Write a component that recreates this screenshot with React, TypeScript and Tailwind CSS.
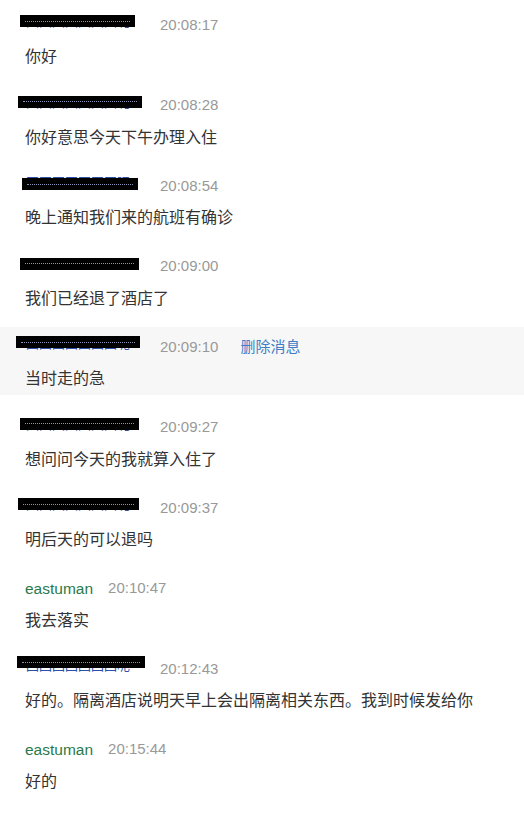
const messages = [
  { name: null, box: [20, 115, 15], time: '20:08:17', text: '你好' },
  { name: null, box: [18, 124, 15], time: '20:08:28', text: '你好意思今天下午办理入住' },
  { name: null, box: [22, 116, 17], time: '20:08:54', text: '晚上通知我们来的航班有确诊' },
  { name: null, box: [20, 119, 16], time: '20:09:00', text: '我们已经退了酒店了' },
  { name: null, box: [16, 124, 14], time: '20:09:10', text: '当时走的急', active: true },
  { name: null, box: [20, 119, 15], time: '20:09:27', text: '想问问今天的我就算入住了' },
  { name: null, box: [18, 121, 15], time: '20:09:37', text: '明后天的可以退吗' },
  { name: 'eastuman', time: '20:10:47', text: '我去落实' },
  { name: null, box: [17, 128, 12], time: '20:12:43', text: '好的。隔离酒店说明天早上会出隔离相关东西。我到时候发给你' },
  { name: 'eastuman', time: '20:15:44', text: '好的' },
];

// name is covered by a black box in the screenshot
function Redacted({ left, width, top }: { left: number; width: number; top: number }) {
  return (
    <div className="relative w-[135px] h-[22px] shrink-0">
      <div className="absolute left-[1px] top-[1px] text-[13px] leading-[14px] text-[#2b4fa8] whitespace-nowrap overflow-hidden w-[108px]">
        回回回回回回回呢
      </div>
      <div
        className="absolute bg-black flex items-center justify-center px-[5px]"
        style={{ left: left - 25, width, top: top - 14, height: 12 }}
      >
        <div className="w-full border-t border-dotted border-[#8a93b8]" />
      </div>
    </div>
  );
}

export default function App() {
  return (
    <div
      className="w-[524px] h-[813px] bg-white pt-[5px] overflow-hidden"
      style={{ fontFamily: '"Liberation Sans", "Noto Sans CJK SC", sans-serif' }}
    >
      {messages.map((m, i) => (
        <div
          key={i}
          className={`h-[68px] pt-[9px] pl-[25px] mb-[12.5px] ${m.active ? 'bg-[#f7f7f7]' : ''}`}
        >
          <div className="flex items-center h-[22px] text-[15px]">
            {m.name ? (
              <span className="text-[#2a7a4a] text-[15.5px] mr-[15px]">{m.name}</span>
            ) : (
              <Redacted left={m.box![0]} width={m.box![1]} top={m.box![2]} />
            )}
            <span className="text-[#999999]">{m.time}</span>
            {m.active && <span className="ml-[22px] text-[#3f7ec6] text-[15px]">删除消息</span>}
          </div>
          <div className="mt-[10px] h-[22px] leading-[22px] text-[16px] text-[#333333] whitespace-nowrap">
            {m.text}
          </div>
        </div>
      ))}
    </div>
  );
}
